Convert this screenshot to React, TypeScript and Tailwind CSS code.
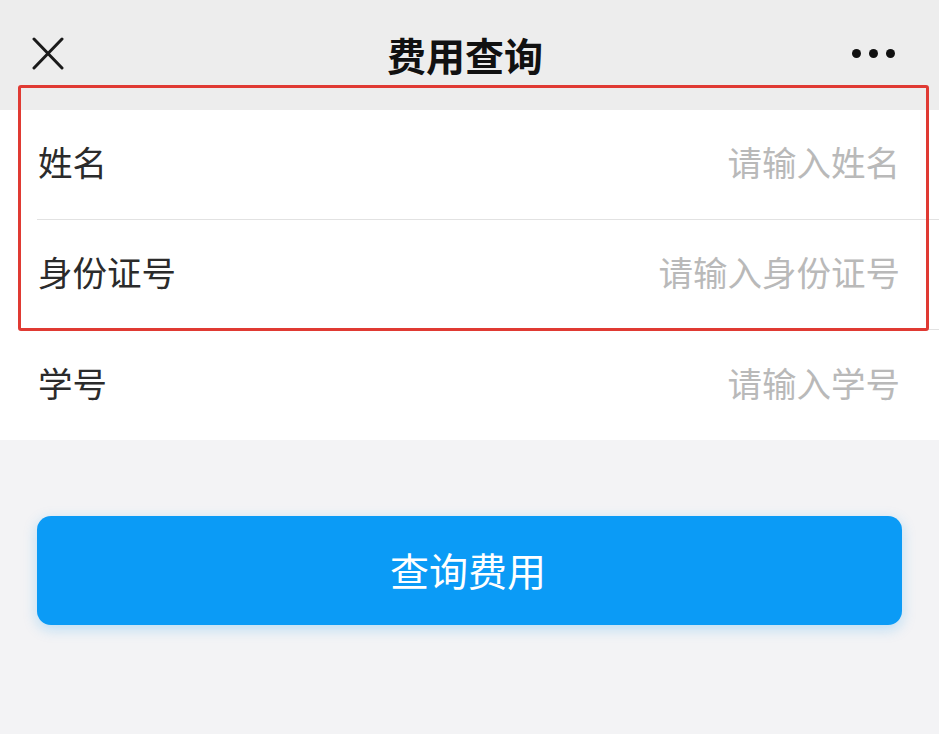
import React from 'react';

const rows = [
  { label: '姓名', placeholder: '请输入姓名' },
  { label: '身份证号', placeholder: '请输入身份证号' },
  { label: '学号', placeholder: '请输入学号' },
];

export default function App() {
  return (
    <div
      className="relative w-[939px] h-[734px] overflow-hidden bg-[#f3f3f5]"
      style={{ fontFamily: '"Noto Sans CJK SC", "Noto Sans", sans-serif' }}
    >
      {/* Top bar */}
      <div className="h-[110px] bg-[#ededed] flex items-center justify-between pl-[32px] pr-[44px] pb-[4px]">
        <svg width="32" height="33" viewBox="0 0 32 33" className="text-[#1a1a1a]">
          <path d="M2 2 L30 31 M30 2 L2 31" stroke="currentColor" strokeWidth="3" strokeLinecap="round" />
        </svg>
        <div className="absolute left-0 right-0 top-[30px] text-center text-[39px] font-bold leading-[48px] text-[#111] pr-[9px]">
          费用查询
        </div>
        <div className="flex items-center gap-[8px] pt-[1px]">
          <span className="w-[9px] h-[9px] rounded-full bg-[#111]" />
          <span className="w-[9px] h-[9px] rounded-full bg-[#111]" />
          <span className="w-[9px] h-[9px] rounded-full bg-[#111]" />
        </div>
      </div>

      {/* Form */}
      <div className="bg-white">
        {rows.map((r, i) => (
          <div key={r.label} className="pl-[37px]">
            <div
              className={
                'h-[110px] flex items-center justify-between pr-[39px] pb-[6px] ' +
                (i < rows.length - 1 ? 'border-b border-[#e2e2e2]' : '')
              }
            >
              <span className="text-[34.5px] leading-none text-[#2b2b2b] pl-[1px]">{r.label}</span>
              <span className="text-[34.5px] leading-none text-[#b9b9b9]">{r.placeholder}</span>
            </div>
          </div>
        ))}
      </div>

      {/* Button */}
      <div className="px-[37px] pt-[76px]">
        <button className="w-[865px] h-[109px] rounded-[14px] bg-[#0b9bf6] text-white text-[39px] leading-none pr-[3px] pb-[2px] shadow-[0_4px_14px_rgba(11,155,246,0.25)]">
          查询费用
        </button>
      </div>

      {/* Annotation box */}
      <div className="absolute left-[18px] top-[85px] w-[911px] h-[246px] border-[3px] border-[#e03a33] rounded-[3px] pointer-events-none" />
    </div>
  );
}
